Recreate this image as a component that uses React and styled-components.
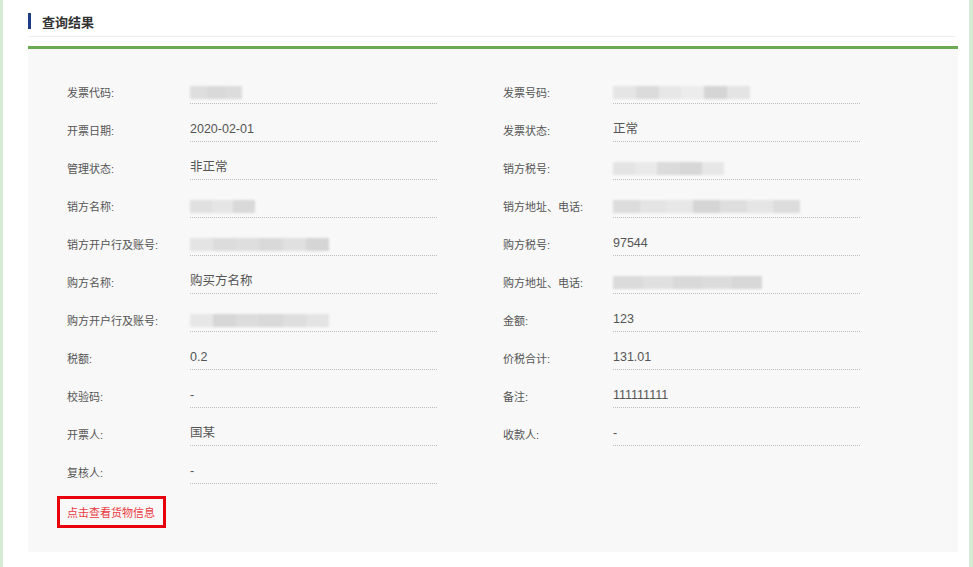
import styled, { createGlobalStyle } from "styled-components";

const GlobalStyle = createGlobalStyle`
  html, body {
    margin: 0;
    padding: 0;
    background: #fff;
  }
  body {
    font-family: "Liberation Sans", "Noto Sans CJK SC", Arial, sans-serif;
    color: #555;
  }
`;

const Page = styled.div`
  min-height: 567px;
  box-sizing: border-box;
  border-left: 3px solid #d5ebd3;
  border-right: 4px solid #d5ebd3;
  padding: 0 11px 16px 25px;
`;

const Header = styled.div`
  display: flex;
  align-items: center;
  height: 37px;
  padding-top: 6px;
  box-sizing: border-box;
  border-bottom: 1px solid #ededed;
  margin-right: 2px;
`;

const Mark = styled.span`
  width: 3px;
  height: 16px;
  background: #1d3c87;
  margin-right: 11px;
`;

const Title = styled.h3`
  margin: 0;
  font-size: 13px;
  font-weight: bold;
  color: #333;
`;

const Panel = styled.section`
  margin-top: 9px;
  border-top: 3px solid #6aaa50;
  background: #f8f8f8;
  padding: 32px 0 24px 39px;
`;

const Grid = styled.div`
  display: grid;
  grid-template-columns: 370px 357px;
  column-gap: 66px;
  row-gap: 16px;
`;

const Field = styled.div`
  display: flex;
  align-items: center;
  height: 22px;
`;

const Label = styled.span`
  flex: 0 0 ${(p) => p.$w}px;
  font-size: 11px;
  color: #555;
  white-space: nowrap;
`;

const Value = styled.span`
  flex: 1;
  height: 22px;
  line-height: 23px;
  font-size: 12.5px;
  color: #555;
  border-bottom: 1px dotted #bdbdbd;
  display: flex;
  align-items: center;
`;

const Smudge = styled.span`
  display: block;
  height: 13px;
  margin-top: 1px;
  filter: blur(1.2px);
  opacity: 0.9;
`;

const GoodsLink = styled.a`
  display: inline-block;
  margin: 13px 0 0 -10px;
  padding: 5px 8px 5px 7px;
  border: 3px solid #e8000b;
  font-size: 11px;
  color: #e8383f;
  text-decoration: none;
  cursor: pointer;
`;

// masked values: a run of grey shades spread over the given width
const Masked = ({ width, shades }) => {
  const step = 100 / shades.length;
  const stops = shades
    .map((c, i) => `${c} ${i * step}%, ${c} ${(i + 1) * step}%`)
    .join(", ");
  return (
    <Smudge style={{ width, background: `linear-gradient(90deg, ${stops})` }} />
  );
};

const rows = [
  [
    ["发票代码:", { w: 52, s: ["#dcdcdc", "#d6d6d6", "#d9d9d9"] }],
    ["发票号码:", { w: 137, s: ["#e4e4e4", "#d8d8d8", "#e6e6e6", "#ebebeb", "#d2d2d2", "#e2e2e2"] }],
  ],
  [
    ["开票日期:", "2020-02-01"],
    ["发票状态:", "正常"],
  ],
  [
    ["管理状态:", "非正常"],
    ["销方税号:", { w: 111, s: ["#e2e2e2", "#e8e8e8", "#d8d8d8", "#d4d4d4", "#e6e6e6"] }],
  ],
  [
    ["销方名称:", { w: 65, s: ["#dedede", "#e4e4e4", "#d6d6d6"] }],
    ["销方地址、电话:", { w: 187, s: ["#d9d9d9", "#e2e2e2", "#e6e6e6", "#d2d2d2", "#dcdcdc", "#e4e4e4", "#dadada"] }],
  ],
  [
    ["销方开户行及账号:", { w: 139, s: ["#e2e2e2", "#d9d9d9", "#dcdcdc", "#d6d6d6", "#dedede", "#d2d2d2"] }],
    ["购方税号:", "97544"],
  ],
  [
    ["购方名称:", "购买方名称"],
    ["购方地址、电话:", { w: 149, s: ["#d8d8d8", "#dedede", "#d6d6d6", "#dadada", "#d4d4d4"] }],
  ],
  [
    ["购方开户行及账号:", { w: 139, s: ["#e6e6e6", "#d4d4d4", "#d9d9d9", "#d6d6d6", "#dcdcdc", "#e2e2e2"] }],
    ["金额:", "123"],
  ],
  [
    ["税额:", "0.2"],
    ["价税合计:", "131.01"],
  ],
  [
    ["校验码:", "-"],
    ["备注:", "111111111"],
  ],
  [
    ["开票人:", "国某"],
    ["收款人:", "-"],
  ],
  [["复核人:", "-"]],
];

const Item = ({ label, value, labelWidth }) => (
  <Field>
    <Label $w={labelWidth}>{label}</Label>
    <Value>
      {typeof value === "string" ? value : <Masked width={value.w} shades={value.s} />}
    </Value>
  </Field>
);

export default function App() {
  return (
    <>
      <GlobalStyle />
      <Page>
        <Header>
          <Mark />
          <Title>查询结果</Title>
        </Header>
        <Panel>
          <Grid>
            {rows.map((row, i) =>
              row.map(([label, value], j) => (
                <Item
                  key={`${i}-${j}`}
                  label={label}
                  value={value}
                  labelWidth={j === 0 ? 123 : 110}
                />
              ))
            )}
          </Grid>
          <GoodsLink>点击查看货物信息</GoodsLink>
        </Panel>
      </Page>
    </>
  );
}
